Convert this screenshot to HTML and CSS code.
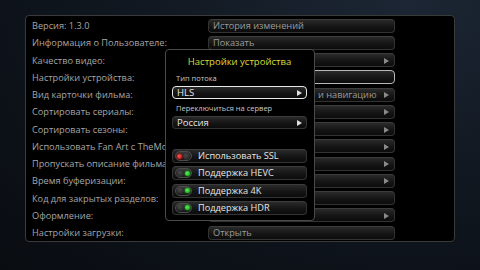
FILE: index.html
```html
<!DOCTYPE html>
<html lang="ru">
<head>
    <meta charset="UTF-8">
    <title>Настройки</title>
    <link rel="stylesheet" href="styles.css">
</head>
<body>
    <div class="panel">
        <div class="row"><span class="label">Версия: 1.3.0</span><button class="btn">История изменений</button></div>
        <div class="row"><span class="label">Информация о Пользователе:</span><button class="btn">Показать</button></div>
        <div class="row"><span class="label">Качество видео:</span><button class="btn arrow"></button></div>
        <div class="row"><span class="label">Настройки устройства:</span><button class="btn focus"></button></div>
        <div class="row"><span class="label">Вид карточки фильма:</span><button class="btn arrow tail">и навигацию</button></div>
        <div class="row"><span class="label">Сортировать сериалы:</span><button class="btn arrow"></button></div>
        <div class="row"><span class="label">Сортировать сезоны:</span><button class="btn arrow"></button></div>
        <div class="row"><span class="label">Использовать Fan Art с TheMovieDB:</span><button class="btn arrow"></button></div>
        <div class="row"><span class="label">Пропускать описание фильма:</span><button class="btn arrow"></button></div>
        <div class="row"><span class="label">Время буферизации:</span><button class="btn arrow"></button></div>
        <div class="row"><span class="label">Код для закрытых разделов:</span><button class="btn"></button></div>
        <div class="row"><span class="label">Оформление:</span><button class="btn arrow"></button></div>
        <div class="row"><span class="label">Настройки загрузки:</span><button class="btn">Открыть</button></div>
    </div>

    <div class="dialog">
        <div class="dialog-title">Настройки устройства</div>
        <div class="field-label">Тип потока</div>
        <button class="sel focus arrow">HLS</button>
        <div class="field-label">Переключиться на сервер</div>
        <button class="sel arrow">Россия</button>
        <div class="toggles">
            <button class="sel toggle"><span class="switch off"><span class="led"></span><span class="knob"></span></span>Использовать SSL</button>
            <button class="sel toggle"><span class="switch on"><span class="knob"></span><span class="led"></span></span>Поддержка HEVC</button>
            <button class="sel toggle"><span class="switch on"><span class="knob"></span><span class="led"></span></span>Поддержка 4K</button>
            <button class="sel toggle"><span class="switch on"><span class="knob"></span><span class="led"></span></span>Поддержка HDR</button>
        </div>
    </div>
</body>
</html>
```

FILE: styles.css
```css
* {
    box-sizing: border-box;
}

body {
    margin: 0;
    width: 480px;
    height: 270px;
    overflow: hidden;
    font-family: "Open Sans", "Noto Sans", sans-serif;
    background: radial-gradient(ellipse at 85% 0%, #1c2634 0%, #111821 45%, #090c11 100%);
    padding: 15px 0 0 25px;
}

.panel {
    width: 430px;
    height: 227px;
    border: 1px solid #3a3a3a;
    border-radius: 4px;
    background: #000;
    padding: 1px 0 0 6px;
}

.row {
    display: grid;
    grid-template-columns: 176px 187px;
    align-items: center;
    height: 17.25px;
}

.label {
    color: #a6a6a6;
    font-size: 9.2px;
    white-space: nowrap;
    overflow: hidden;
}

.btn, .sel {
    position: relative;
    height: 14px;
    padding: 0 0 0 4px;
    border: 1px solid #333;
    border-top-color: #3c3c3c;
    border-radius: 4px;
    background: linear-gradient(#2a2a2a, #151515 55%, #0c0c0c);
    color: #9c9c9c;
    font-family: inherit;
    font-size: 9.2px;
    line-height: 12px;
    text-align: left;
    white-space: nowrap;
    overflow: hidden;
}

.btn.tail {
    padding-left: 109px;
}

.arrow::after {
    content: "";
    position: absolute;
    right: 5px;
    top: 3.5px;
    border-left: 5px solid #8a8a8a;
    border-top: 3px solid transparent;
    border-bottom: 3px solid transparent;
}

.btn.focus {
    border: 1.5px solid #b8b8b8;
}

/* dialog over the list */
.dialog {
    position: absolute;
    left: 165px;
    top: 49px;
    width: 150px;
    height: 172px;
    background: #000;
    border: 1px solid #4a4a4a;
    border-radius: 4px;
    padding: 0 7px 0 6px;
}

.dialog-title {
    color: #dede3a;
    font-size: 9.5px;
    text-align: center;
    margin-top: 5px;
    height: 14px;
    line-height: 14px;
}

.field-label {
    color: #c8c8c8;
    font-size: 7.5px;
    height: 10px;
    line-height: 10px;
    margin: 4px 0 3px 4px;
}

.sel {
    display: block;
    width: 135px;
    height: 13px;
    color: #e6e6e6;
    font-size: 9.5px;
}

.sel.arrow::after {
    border-left-color: #e0e0e0;
    top: 3px;
    right: 4px;
}

.sel.focus {
    border: 1.5px solid #e8e8e8;
}

.toggles {
    margin-top: 20px;
    display: flex;
    flex-direction: column;
    gap: 3.3px;
}

.toggle {
    display: flex;
    align-items: center;
    height: 14px;
    padding-left: 2px;
    font-size: 9.2px;
}

.switch {
    display: flex;
    align-items: center;
    justify-content: space-between;
    width: 17px;
    height: 10px;
    margin-right: 6px;
    padding: 0 1px;
    border-radius: 5px;
    background: linear-gradient(#3a3a3a, #161616);
    border: 1px solid #4c4c4c;
}

.knob {
    width: 7px;
    height: 7px;
    border-radius: 50%;
    background: radial-gradient(circle at 40% 35%, #4a4a4a, #1a1a1a);
}

.led {
    width: 5px;
    height: 5px;
    border-radius: 50%;
}

.off .led {
    background: radial-gradient(circle at 40% 40%, #ff5555, #c00000);
    box-shadow: 0 0 2px #f00;
}

.on .led {
    background: radial-gradient(circle at 40% 40%, #55ee55, #10a010);
    box-shadow: 0 0 2px #0c0;
}
```
